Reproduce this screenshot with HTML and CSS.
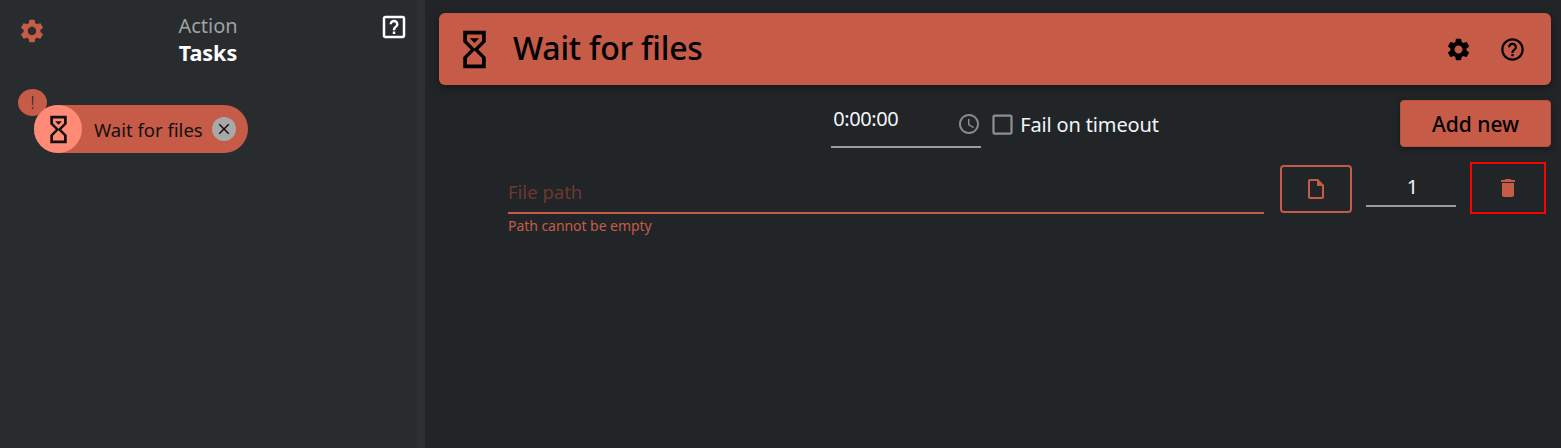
FILE: index.html
```html
<!DOCTYPE html>
<html lang="en">
<head>
<meta charset="utf-8">
<title>Wait for files</title>
<link rel="stylesheet" href="styles.css">
</head>
<body>
<div class="app">
  <aside class="sidebar">
    <header class="side-head">
      <svg class="side-gear" viewBox="0 0 24 24"><path d="M19.14 12.94c.04-.3.06-.61.06-.94 0-.32-.02-.64-.07-.94l2.03-1.58c.18-.14.23-.41.12-.61l-1.92-3.32c-.12-.22-.37-.29-.59-.22l-2.39.96c-.5-.38-1.03-.7-1.62-.94l-.36-2.54c-.04-.24-.24-.41-.48-.41h-3.84c-.24 0-.43.17-.47.41l-.36 2.54c-.59.24-1.13.57-1.62.94l-2.39-.96c-.22-.08-.47 0-.59.22L2.74 8.87c-.12.21-.08.47.12.61l2.03 1.58c-.05.3-.09.63-.09.94s.02.64.07.94l-2.03 1.58c-.18.14-.23.41-.12.61l1.92 3.32c.12.22.37.29.59.22l2.39-.96c.5.38 1.03.7 1.62.94l.36 2.54c.05.24.24.41.48.41h3.84c.24 0 .44-.17.47-.41l.36-2.54c.59-.24 1.13-.56 1.62-.94l2.39.96c.22.08.47 0 .59-.22l1.92-3.32c.12-.22.07-.47-.12-.61l-2.01-1.58zM12 15.6c-1.98 0-3.6-1.62-3.6-3.6s1.62-3.6 3.6-3.6 3.6 1.62 3.6 3.6-1.62 3.6-3.6 3.6z"/></svg>
      <div class="side-title">
        <div class="side-action">Action</div>
        <div class="side-tasks">Tasks</div>
      </div>
      <svg class="side-help" viewBox="0 0 24 24"><path d="M19 3H5c-1.1 0-2 .9-2 2v14c0 1.1.9 2 2 2h14c1.1 0 2-.9 2-2V5c0-1.1-.9-2-2-2zm0 16H5V5h14v14z"/><path d="M11 15.6h2v2h-2zM12 6.2c-2 0-3.6 1.6-3.6 3.6h2c0-.9.7-1.6 1.6-1.6s1.600.7 1.600 1.600c0 1.700-2.600 1.600-2.600 4.800h2c0-2.200 2.600-2.500 2.600-4.800 0-2-1.600-3.600-3.600-3.600z"/></svg>
    </header>
    <div class="chip-wrap">
      <span class="chip-alert">!</span>
      <div class="chip">
        <span class="chip-avatar">
          <svg class="chip-glass" viewBox="0 0 24 24"><path d="M6 2v6h.01L6 8.010 10 12l-4 4 .01.01H6V22h12v-5.990h-.01L18 16l-4-4 4-3.990-.01-.01H18V2H6zm10 14.500V20H8v-3.500l4-4 4 4zm-4-5l-4-4V4h8v3.500l-4 4z"/><path d="M9.500 6h5L12 8.500z"/></svg>
        </span>
        <span class="chip-label">Wait for files</span>
        <span class="chip-close">
          <svg viewBox="0 0 24 24"><path d="M19 6.410 17.590 5 12 10.590 6.410 5 5 6.410 10.590 12 5 17.590 6.410 19 12 13.410 17.590 19 19 17.590 13.410 12z"/></svg>
        </span>
      </div>
    </div>
  </aside>
  <div class="strip"></div>
  <main class="main">
    <section class="title-card">
      <svg class="title-glass" viewBox="0 0 24 24"><path d="M6 2v6h.01L6 8.010 10 12l-4 4 .01.01H6V22h12v-5.990h-.01L18 16l-4-4 4-3.990-.01-.01H18V2H6zm10 14.500V20H8v-3.500l4-4 4 4zm-4-5l-4-4V4h8v3.500l-4 4z"/><path d="M9.500 6h5L12 8.500z"/></svg>
      <h1 class="title-text">Wait for files</h1>
      <svg class="title-icon title-gear" viewBox="0 0 24 24"><path d="M19.14 12.94c.04-.3.06-.61.06-.94 0-.32-.02-.64-.07-.94l2.03-1.58c.18-.14.23-.41.12-.61l-1.92-3.32c-.12-.22-.37-.29-.59-.22l-2.39.96c-.5-.38-1.03-.7-1.62-.94l-.36-2.54c-.04-.24-.24-.41-.48-.41h-3.84c-.24 0-.43.17-.47.41l-.36 2.54c-.59.24-1.13.57-1.62.94l-2.39-.96c-.22-.08-.47 0-.59.22L2.74 8.87c-.12.21-.08.47.12.61l2.03 1.58c-.05.3-.09.63-.09.94s.02.64.07.94l-2.03 1.58c-.18.14-.23.41-.12.61l1.92 3.32c.12.22.37.29.59.22l2.39-.96c.5.38 1.03.7 1.62.94l.36 2.54c.05.24.24.41.48.41h3.84c.24 0 .44-.17.47-.41l.36-2.54c.59-.24 1.13-.56 1.62-.94l2.39.96c.22.08.47 0 .59-.22l1.92-3.32c.12-.22.07-.47-.12-.61l-2.01-1.58zM12 15.600c-1.980 0-3.600-1.620-3.600-3.600s1.620-3.600 3.600-3.600 3.600 1.620 3.600 3.600-1.620 3.600-3.600 3.600z"/></svg>
      <svg class="title-icon" viewBox="0 0 24 24"><path d="M11 18h2v-2h-2v2zm1-16C6.480 2 2 6.480 2 12s4.480 10 10 10 10-4.480 10-10S17.520 2 12 2zm0 18c-4.410 0-8-3.590-8-8s3.590-8 8-8 8 3.590 8 8-3.590 8-8 8zm0-14c-2.210 0-4 1.790-4 4h2c0-1.100.9-2 2-2s2 .9 2 2c0 2-3 1.750-3 5h2c0-2.250 3-2.500 3-5 0-2.210-1.790-4-4-4z"/></svg>
    </section>
    <section class="options">
      <div class="options-center">
        <div class="timer">
          <span class="timer-value">0:00:00</span>
          <svg class="timer-clock" viewBox="0 0 24 24"><path d="M11.990 2C6.470 2 2 6.480 2 12s4.470 10 9.990 10C17.520 22 22 17.520 22 12S17.520 2 11.990 2zM12 20c-4.420 0-8-3.580-8-8s3.580-8 8-8 8 3.580 8 8-3.580 8-8 8zm.5-13H11v6l5.250 3.150.75-1.230-4.500-2.670z"/></svg>
        </div>
        <label class="check">
          <svg class="check-box" viewBox="0 0 24 24"><path d="M19 5v14H5V5h14m0-2H5c-1.100 0-2 .9-2 2v14c0 1.100.9 2 2 2h14c1.100 0 2-.9 2-2V5c0-1.100-.9-2-2-2z"/></svg>
          <span class="check-label">Fail on timeout</span>
        </label>
      </div>
      <button class="add-new">Add new</button>
    </section>
    <section class="file-row">
      <div class="file-field">
        <div class="file-input">File path</div>
        <div class="file-error">Path cannot be empty</div>
      </div>
      <button class="browse">
        <svg viewBox="0 0 24 24"><path d="M14 2H6c-1.100 0-2 .9-2 2v16c0 1.100.89 2 1.990 2H18c1.100 0 2-.9 2-2V8l-6-6zm4 18H6V4h7v5h5v11z"/></svg>
      </button>
      <div class="count">1</div>
      <button class="delete">
        <svg viewBox="0 0 24 24"><path d="M6 19c0 1.100.9 2 2 2h8c1.100 0 2-.9 2-2V7H6v12zM19 4h-3.500l-1-1h-5l-1 1H5v2h14V4z"/></svg>
      </button>
    </section>
  </main>
</div>
</body>
</html>
```
FILE: styles.css
```css
* { box-sizing: border-box; }
html, body { margin: 0; height: 100%; }
body {
  background: #212528;
  color: #fff;
  font-family: "Noto Sans", "Open Sans", sans-serif;
  overflow: hidden;
}
svg { display: block; fill: currentColor; }
.app { display: flex; height: 448px; }

.sidebar { width: 417px; background: #282c2f; flex: none; }
.strip { width: 8px; background: #2c3033; flex: none; }
.side-head {
  display: flex;
  align-items: flex-start;
  justify-content: space-between;
  padding: 12px 8px 0 18px;
  height: 105px;
}
.side-gear { width: 28px; height: 28px; color: #c65b48; margin-top: 5px; }
.side-title { text-align: center; padding-right: 9px; }
.side-action { font-size: 20px; line-height: 27px; color: #9ea3a6; }
.side-tasks { font-size: 21.5px; line-height: 28px; font-weight: 700; color: #fff; }
.side-help { width: 30px; height: 30px; color: #fff; }

.chip-wrap { position: relative; margin-left: 34px; width: 214px; }
.chip-alert {
  position: absolute;
  left: -16px;
  top: -16px;
  width: 29px;
  height: 27px;
  border-radius: 50%;
  background: #c65b48;
  color: #212528;
  font-size: 18px;
  font-weight: 300;
  line-height: 27px;
  text-align: center;
}
.chip {
  display: flex;
  align-items: center;
  height: 48px;
  border-radius: 24px;
  background: #c65b48;
  color: #14100f;
}
.chip-avatar {
  position: relative;
  width: 48px;
  height: 48px;
  flex: none;
  border-radius: 50%;
  background: #ff8a75;
  display: flex;
  align-items: center;
  justify-content: center;
}
.chip-glass { width: 33px; height: 33px; }
.chip-label { margin-left: 12px; font-size: 18.5px; white-space: nowrap; flex: 1; }
.chip-close {
  width: 24px;
  height: 24px;
  margin-right: 12px;
  border-radius: 50%;
  background: #a8a8a8;
  display: flex;
  align-items: center;
  justify-content: center;
  flex: none;
}
.chip-close svg { width: 18px; height: 18px; }

.main { flex: 1; padding: 13px 10px 0 14px; min-width: 0; }
.title-card {
  display: flex;
  align-items: center;
  height: 72px;
  padding: 0 25px 0 13px;
  border-radius: 6px;
  background: #c65b48;
  color: #000;
  box-shadow: 0 3px 8px rgba(0, 0, 0, 0.35);
}
.title-glass { width: 45px; height: 45px; flex: none; }
.title-text { margin: 0 0 3px 16px; flex: 1; font-size: 32px; font-weight: 500; letter-spacing: -0.2px; }
.title-icon { width: 27px; height: 27px; flex: none; }
.title-gear { margin-right: 27px; }

.options {
  display: grid;
  grid-template-columns: 1fr auto 1fr;
  align-items: start;
  margin-top: 15px;
}
.options-center { grid-column: 2; display: flex; align-items: flex-start; }
.timer {
  display: flex;
  width: 150px;
  height: 48px;
  padding: 5px 0 0 2px;
  border-bottom: 2px solid #9c9c9c;
  justify-content: space-between;
}
.timer-value { font-size: 20px; line-height: 28px; color: #f2f5f7; letter-spacing: -0.4px; }
.timer-clock { width: 24px; height: 24px; margin: 7px 0 0 0; color: #8a8a8a; }
.check { display: flex; align-items: center; margin-left: 8px; height: 48px; }
.check-box { width: 27px; height: 27px; color: #8f8f8f; flex: none; }
.check-label { margin-left: 4px; font-size: 20px; letter-spacing: -0.15px; color: #f2f5f7; white-space: nowrap; }
.add-new {
  grid-column: 3;
  justify-self: end;
  width: 151px;
  height: 47px;
  border: 1px solid #b85342;
  border-radius: 4px;
  background: #c65b48;
  color: #000;
  font: 500 21px "Noto Sans", sans-serif;
  box-shadow: 0 2px 6px rgba(0, 0, 0, 0.35);
}

.file-row {
  display: flex;
  align-items: flex-start;
  margin-top: 14px;
  padding: 0 5px 0 69px;
}
.file-field { width: 756px; flex: none; margin-top: 3px; }
.file-input {
  height: 49px;
  padding-top: 14px;
  font-size: 18.5px;
  line-height: 26px;
  color: #70372e;
  border-bottom: 2px solid #c65b48;
}
.file-error { margin-top: 2px; font-size: 14px; line-height: 20px; letter-spacing: -0.05px; color: #c65b48; }
.browse {
  width: 72px;
  height: 48px;
  flex: none;
  margin: 3px 0 0 16px;
  padding: 0;
  display: flex;
  align-items: center;
  justify-content: center;
  border: 2px solid #c65b48;
  border-radius: 4px;
  background: transparent;
  color: #c65b48;
}
.browse svg { width: 24px; height: 24px; }
.count {
  width: 90px;
  height: 45px;
  flex: none;
  margin-left: 14px;
  padding-top: 10px;
  padding-left: 3px;
  font-size: 20px;
  line-height: 30px;
  text-align: center;
  color: #f2f5f7;
  border-bottom: 2px solid #9c9c9c;
}
.delete {
  width: 76px;
  height: 52px;
  flex: none;
  margin-left: 14px;
  padding: 0;
  display: flex;
  align-items: center;
  justify-content: center;
  border: 2px solid #f00;
  background: transparent;
  color: #c65b48;
}
.delete svg { width: 24px; height: 24px; }
```
